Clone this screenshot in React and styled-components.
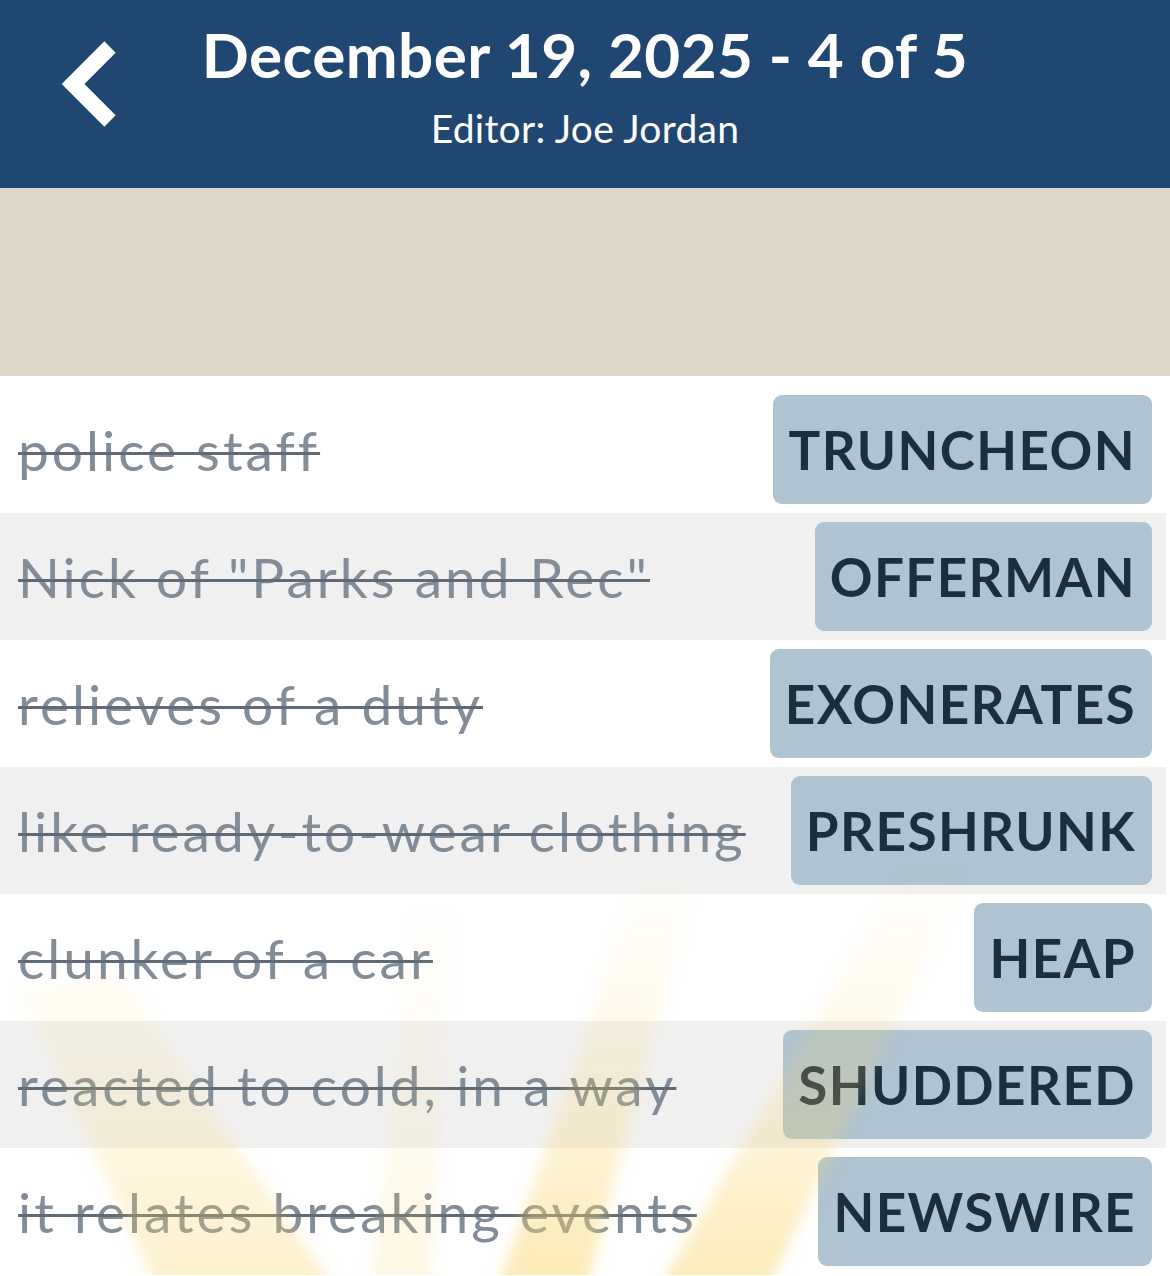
import React from "react";
import styled, { createGlobalStyle } from "styled-components";

const clues = [
  { clue: "police staff", answer: "TRUNCHEON" },
  { clue: 'Nick of "Parks and Rec"', answer: "OFFERMAN" },
  { clue: "relieves of a duty", answer: "EXONERATES" },
  { clue: "like ready-to-wear clothing", answer: "PRESHRUNK" },
  { clue: "clunker of a car", answer: "HEAP" },
  { clue: "reacted to cold, in a way", answer: "SHUDDERED" },
  { clue: "it relates breaking events", answer: "NEWSWIRE" },
];

// sun rays over the bottom of the list, in the burst's own 1170x500 box
const rays = [
  { points: "160,520 340,520 120,200 20,215", strength: 0.7 },
  { points: "370,520 430,520 450,140 415,140", strength: 0.4 },
  { points: "495,520 585,520 695,100 640,100", strength: 1 },
  { points: "655,520 765,520 965,100 900,100", strength: 0.95 },
];

const App = () => {
  return (
    <Page>
      <GlobalStyle />
      <Header>
        <BackButton aria-label="Back">
          <svg width="60" height="90" viewBox="0 0 60 90">
            <path
              d="M50 8 L13 45 L50 82"
              fill="none"
              stroke="#fff"
              strokeWidth="16"
              strokeLinejoin="miter"
            />
          </svg>
        </BackButton>
        <Title>December 19, 2025 - 4 of 5</Title>
        <Subtitle>Editor: Joe Jordan</Subtitle>
      </Header>
      <Banner />
      <List>
        {clues.map((c, i) => (
          <Row key={c.answer} $alt={i % 2 === 1}>
            <Clue>{c.clue}</Clue>
            <Answer>{c.answer}</Answer>
          </Row>
        ))}
        <Sunburst viewBox="0 0 1170 500" preserveAspectRatio="none">
          <defs>
            <linearGradient
              id="rayFade"
              gradientUnits="userSpaceOnUse"
              x1="0"
              y1="500"
              x2="0"
              y2="90"
            >
              <stop offset="0" stopColor="#f8d46a" stopOpacity="0.48" />
              <stop offset="0.4" stopColor="#f8d46a" stopOpacity="0.24" />
              <stop offset="0.8" stopColor="#f8d46a" stopOpacity="0.07" />
              <stop offset="1" stopColor="#f8d46a" stopOpacity="0" />
            </linearGradient>
            <filter id="raySoft" x="-20%" y="-20%" width="140%" height="140%">
              <feGaussianBlur stdDeviation="7" />
            </filter>
          </defs>
          <g filter="url(#raySoft)" fill="url(#rayFade)">
            {rays.map((r) => (
              <polygon key={r.points} points={r.points} opacity={r.strength} />
            ))}
          </g>
        </Sunburst>
      </List>
    </Page>
  );
};

export default App;

const GlobalStyle = createGlobalStyle`
  html, body {
    margin: 0;
    padding: 0;
    background: #ffffff;
  }
  body {
    font-family: "Lato", "Noto Sans", sans-serif;
  }
`;

const Page = styled.div`
  width: 1170px;
  min-height: 1276px;
  overflow: hidden;
  background: #ffffff;
`;

const Header = styled.header`
  position: relative;
  height: 188px;
  background: #1f4771;
  color: #ffffff;
  display: flex;
  flex-direction: column;
  align-items: center;
  padding-top: 17px;
  box-sizing: border-box;
`;

const BackButton = styled.div`
  position: absolute;
  left: 60px;
  top: 39px;
  width: 60px;
  height: 90px;
`;

const Title = styled.h1`
  margin: 0;
  font-size: 62px;
  line-height: 74px;
  font-weight: 700;
  letter-spacing: 0.4px;
`;

const Subtitle = styled.div`
  margin-top: 14px;
  font-size: 39px;
  line-height: 46px;
  font-weight: 400;
  letter-spacing: 0.3px;
`;

const Banner = styled.div`
  height: 188px;
  background: #ddd7ca;
`;

const List = styled.div`
  position: relative;
  padding: 10px 4px 0 0;
`;

const Row = styled.div`
  height: 127px;
  display: flex;
  align-items: center;
  justify-content: space-between;
  gap: 12px;
  padding: 0 14px 0 18px;
  background: ${(p) => (p.$alt ? "#f0f0f0" : "#ffffff")};
`;

const Clue = styled.span`
  font-size: 55px;
  letter-spacing: 3px;
  color: #838d98;
  white-space: nowrap;
  text-decoration: line-through;
  text-decoration-color: #5e6a76;
  text-decoration-thickness: 3px;
`;

const Answer = styled.span`
  height: 109px;
  display: flex;
  align-items: center;
  padding: 0 16px 0 15px;
  border-radius: 9px;
  background: #b0c3d0;
  color: #1c2e40;
  font-size: 53px;
  font-weight: 700;
  letter-spacing: 1.4px;
  white-space: nowrap;
`;

const Sunburst = styled.svg`
  position: absolute;
  left: 0;
  bottom: 0;
  width: 1170px;
  height: 500px;
  pointer-events: none;
`;
